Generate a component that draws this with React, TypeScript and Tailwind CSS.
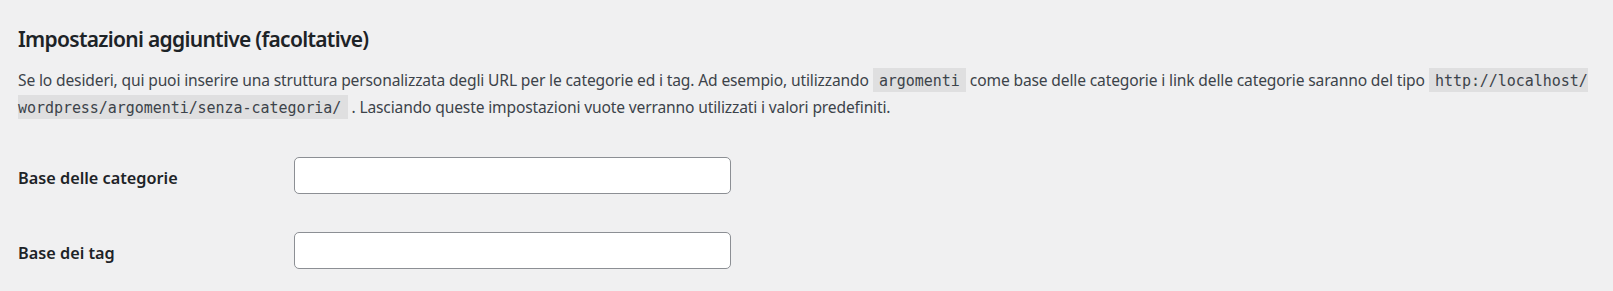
export default function App() {
  const codeCls =
    "bg-[#dfdfe0] font-['DejaVu_Sans_Mono',monospace] text-[15px] tracking-[-0.05px] [box-decoration-break:slice] text-[#3c434a]";

  return (
    <div className="min-h-screen bg-[#f0f0f1] px-[18px] pt-[25px] font-['Noto_Sans',sans-serif] text-[#3c434a]">
      <h2 className="text-[21px] leading-[29.6px] font-semibold tracking-[-0.7px] text-[#1d2327]">
        Impostazioni aggiuntive (facoltative)
      </h2>

      <p className="mt-[12.4px] text-[15.6px] leading-[26px] tracking-[-0.15px] whitespace-nowrap">
        Se lo desideri, qui puoi inserire una struttura personalizzata degli URL per le categorie ed i tag. Ad esempio, utilizzando{' '}
        <code className={`${codeCls} pl-[6.25px] pr-[6.25px] pt-[3.75px] pb-[2.5px]`}>argomenti</code>{' '}
        come base delle categorie i link delle categorie saranno del tipo{' '}
        <code className={`${codeCls} pl-[6.25px] pr-[6.25px] pt-[3.75px] pb-[2.5px]`}>
          http://localhost/
          <br />
          wordpress/argomenti/senza-categoria/
        </code>{' '}
        . Lasciando queste impostazioni vuote verranno utilizzati i valori predefiniti.
      </p>

      <div className="mt-[17px] flex flex-col">
        {[
          { id: 'category_base', label: 'Base delle categorie' },
          { id: 'tag_base', label: 'Base dei tag' },
        ].map((row) => (
          <div key={row.id} className="flex items-start">
            <label
              htmlFor={row.id}
              className="w-[262.5px] shrink-0 pt-[30px] pr-[12.5px] text-[16.25px] leading-[21px] font-semibold text-[#1d2327]"
            >
              {row.label}
            </label>
            <div className="py-[18.75px] pl-[13px]">
              <input
                id={row.id}
                type="text"
                className="block h-[37.5px] w-[437.5px] rounded-[5px] border border-[#8c8f94] bg-white px-[10px] text-[17.5px] text-[#2c3338] outline-none"
              />
            </div>
          </div>
        ))}
      </div>
    </div>
  );
}
